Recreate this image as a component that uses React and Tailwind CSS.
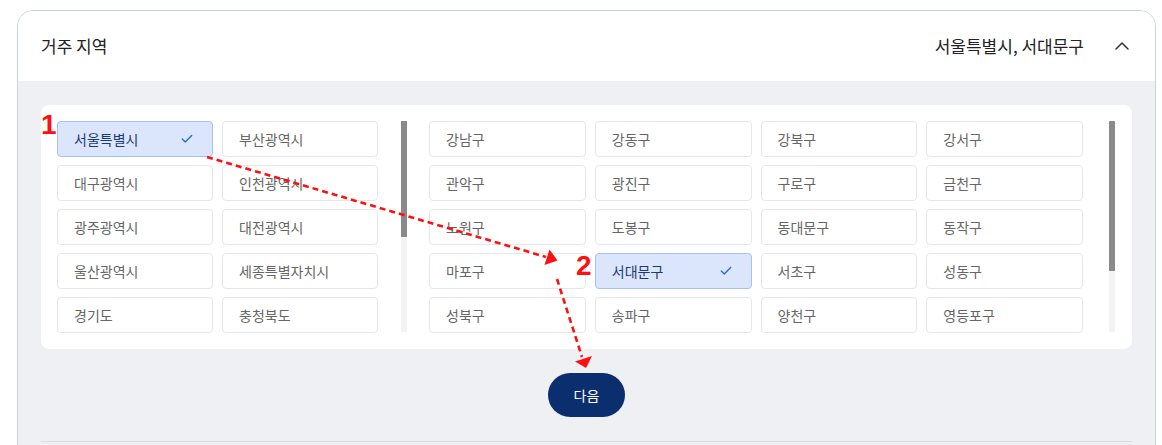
import { Check, ChevronUp } from "lucide-react";

const cities = [
  "서울특별시", "부산광역시", "대구광역시", "인천광역시", "광주광역시",
  "대전광역시", "울산광역시", "세종특별자치시", "경기도", "충청북도",
];

const districts = [
  "강남구", "강동구", "강북구", "강서구",
  "관악구", "광진구", "구로구", "금천구",
  "노원구", "도봉구", "동대문구", "동작구",
  "마포구", "서대문구", "서초구", "성동구",
  "성북구", "송파구", "양천구", "영등포구",
];

function Option({ label, selected }) {
  if (selected) {
    return (
      <div className="h-9 flex items-center justify-between pl-4 pr-[18px] rounded-[4px] border border-[#abc0e6] bg-[#dbe6fc] text-[#1c3a72] text-sm">
        <span>{label}</span>
        <Check size={14} strokeWidth={2.5} className="text-[#2d6fd8]" />
      </div>
    );
  }
  return (
    <div className="h-9 flex items-center pl-4 rounded-[4px] border border-[#e5e7eb] bg-white text-[#666] text-sm">
      {label}
    </div>
  );
}

function Scrollbar({ thumb }) {
  return (
    <div className="w-[6px] h-[211px] bg-[#f3f3f3] shrink-0">
      <div className={`w-full bg-[#8a8a8a] ${thumb}`} />
    </div>
  );
}

function Annotations() {
  return (
    <>
      <svg
        className="absolute inset-0 pointer-events-none"
        width="1162"
        height="445"
        viewBox="0 0 1162 445"
      >
        <g stroke="#ff1010" strokeWidth="2.6" strokeDasharray="6 4" fill="none">
          <line x1="207" y1="157" x2="546" y2="257" />
          <line x1="557" y1="279" x2="582" y2="357" />
        </g>
        <g fill="#ff1010">
          <polygon points="557.5,260.5 549.5,249.5 544.5,265" />
          <polygon points="586,368 575,361.5 592,356" />
        </g>
      </svg>
      <div className="absolute left-[41px] top-[111px] text-[28px] leading-none font-bold text-[#ff1010] font-['Liberation_Sans',Arial,sans-serif]">
        1
      </div>
      <div className="absolute left-[576px] top-[252px] text-[28px] leading-none font-bold text-[#ff1010] font-['Liberation_Sans',Arial,sans-serif]">
        2
      </div>
    </>
  );
}

export default function App() {
  return (
    <div className="relative h-[445px] overflow-hidden bg-white font-['Noto_Sans_CJK_KR','Noto_Sans',sans-serif]">
      <div className="ml-[17px] mt-[10px] w-[1139px] border border-[#c8d1e6] rounded-t-[16px] overflow-hidden">
        <div className="h-[70px] flex items-center justify-between pl-[23px] pr-[21px] bg-white">
          <span className="text-[17px] text-[#222]">거주 지역</span>
          <div className="flex items-center gap-[26px]">
            <span className="text-[17px] text-[#222]">서울특별시, 서대문구</span>
            <ChevronUp size={24} strokeWidth={1.5} className="text-[#333]" />
          </div>
        </div>

        <div className="bg-[#eef0f4] px-[23px] pt-6 pb-[400px]">
          <div className="bg-white rounded-lg p-4 flex">
            <div className="w-[321px] grid grid-cols-2 gap-x-[9px] gap-y-2 shrink-0">
              {cities.map((c) => (
                <Option key={c} label={c} selected={c === "서울특별시"} />
              ))}
            </div>
            <div className="ml-[23px]">
              <Scrollbar thumb="h-[116px]" />
            </div>
            <div className="ml-[22px] w-[654px] grid grid-cols-4 gap-x-[9px] gap-y-2 shrink-0">
              {districts.map((d) => (
                <Option key={d} label={d} selected={d === "서대문구"} />
              ))}
            </div>
            <div className="ml-[26px]">
              <Scrollbar thumb="h-[150px]" />
            </div>
          </div>

          <div className="flex justify-center py-6">
            <button className="w-[77px] h-[44px] rounded-full bg-[#0b2f6e] text-white text-sm">
              다음
            </button>
          </div>
          <div className="border-t border-[#d9dce3]" />
        </div>
      </div>
      <Annotations />
    </div>
  );
}
